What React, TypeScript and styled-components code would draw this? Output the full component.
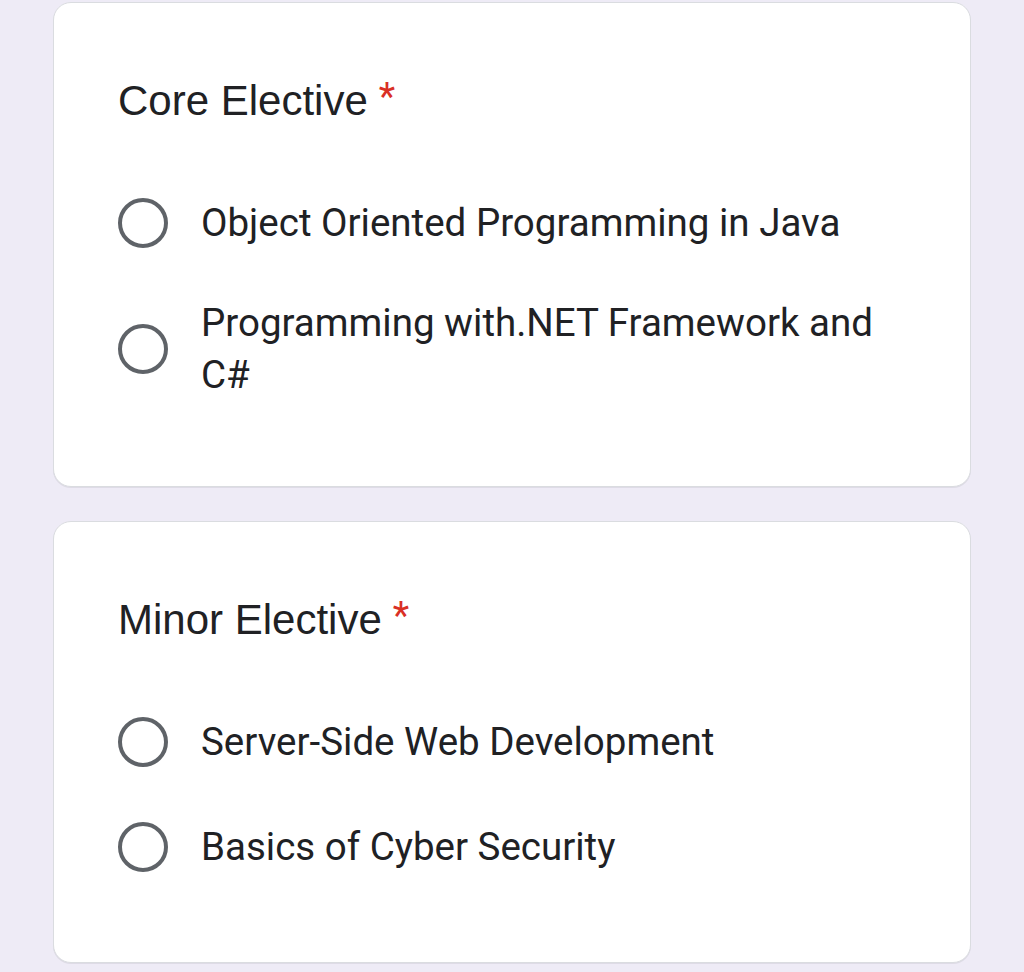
import React from "react";
import styled, { createGlobalStyle } from "styled-components";

interface Question {
  title: string;
  options: string[];
}

const questions: Question[] = [
  {
    title: "Core Elective",
    options: [
      "Object Oriented Programming in Java",
      "Programming with.NET Framework and C#",
    ],
  },
  {
    title: "Minor Elective",
    options: ["Server-Side Web Development", "Basics of Cyber Security"],
  },
];

const GlobalStyle = createGlobalStyle`
  html, body {
    margin: 0;
    padding: 0;
    background: #eeebf6;
  }
`;

const Page = styled.main`
  display: flex;
  flex-direction: column;
  gap: 34px;
  padding: 2px 53px 0;
  min-height: 972px;
  box-sizing: border-box;
  background: #eeebf6;
`;

const Card = styled.section`
  background: #ffffff;
  border: 1px solid #dadce0;
  border-radius: 18px;
  box-shadow: 0 1px 0 #dedbe6;
  padding: 73px 64px 63px;
`;

const Title = styled.h2`
  margin: 0 0 44px;
  font-family: "Liberation Sans", Arial, sans-serif;
  font-weight: 400;
  font-size: 42px;
  line-height: 50px;
  color: #202124;
`;

const Required = styled.span`
  display: inline-block;
  margin-left: 11px;
  font-family: Roboto, sans-serif;
  font-size: 38px;
  line-height: 38px;
  vertical-align: top;
  position: relative;
  top: 2px;
  color: #d93025;
`;

const OptionList = styled.div`
  display: flex;
  flex-direction: column;
`;

const Option = styled.label`
  display: flex;
  align-items: center;
  gap: 33px;
  min-height: 105px;
  padding: 22px 0;
  box-sizing: border-box;
  cursor: pointer;
`;

const Radio = styled.span`
  flex: none;
  width: 50px;
  height: 50px;
  border: 4px solid #5f6368;
  border-radius: 50%;
  box-sizing: border-box;
`;

const OptionText = styled.span`
  font-family: Roboto, sans-serif;
  font-size: 38.5px;
  line-height: 52px;
  color: #202124;
  max-width: 690px;
`;

export default function App() {
  return (
    <>
      <GlobalStyle />
      <Page>
        {questions.map((q) => (
          <Card key={q.title}>
            <Title>
              {q.title}
              <Required>*</Required>
            </Title>
            <OptionList>
              {q.options.map((opt) => (
                <Option key={opt}>
                  <Radio />
                  <OptionText>{opt}</OptionText>
                </Option>
              ))}
            </OptionList>
          </Card>
        ))}
      </Page>
    </>
  );
}
